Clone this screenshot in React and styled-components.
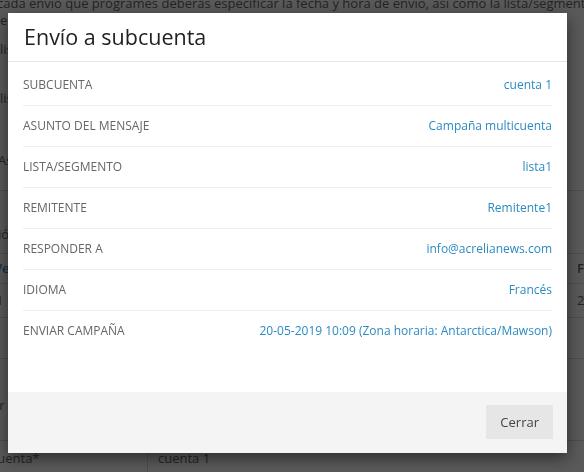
import React from "react"
import styled, { createGlobalStyle } from "styled-components"

const GlobalStyle = createGlobalStyle`
  html, body {
    margin: 0;
    height: 100%;
    overflow: hidden;
    background: #fff;
  }
  body {
    font-family: "Open Sans", "Liberation Sans", sans-serif;
  }
`

/* ---------- page behind the modal ---------- */

const Page = styled.div`
  margin-top: -5px;
  width: 640px;
  color: #666;
  font-size: 13px;
  line-height: 17px;
`

const Line = styled.div`
  white-space: nowrap;
  margin-left: ${props => props.shift || 0}px;
  margin-top: ${props => props.top || 0}px;
  color: ${props => props.link ? "#2b8bc2" : "inherit"};
`

const Section = styled.div`
  margin-top: 21px;
  border-top: 1px solid #ddd;
  padding-top: 35px;
`

const Table = styled.div`
  margin-top: 10px;
  border-top: 1px solid #ddd;
`

const TableRow = styled.div`
  display: grid;
  grid-template-columns: 577px auto;
  align-items: center;
  height: ${props => props.height}px;
  border-bottom: 1px solid #ddd;
  font-weight: ${props => props.head ? 600 : 400};
`

const FormBlock = styled.div`
  padding-top: 38px;
`

const FormRow = styled.div`
  display: grid;
  grid-template-columns: 148px 1fr;
  border-top: 1px solid #ddd;
  margin-top: ${props => props.top || 0}px;
`

const FormLabel = styled.div`
  border-right: 1px solid #ddd;
  padding: 9px 0;
  white-space: nowrap;
  overflow: hidden;
  text-indent: -32px;
`

const FormValue = styled.div`
  padding: 9px 10px;
`

/* ---------- modal ---------- */

const Backdrop = styled.div`
  position: fixed;
  inset: 0;
  background: rgba(0, 0, 0, 0.65);
`

const Dialog = styled.div`
  position: fixed;
  top: 13px;
  left: 8px;
  width: 559px;
  background: #fff;
  box-shadow: 0 5px 15px rgba(0, 0, 0, 0.5);
`

const Header = styled.div`
  height: 48px;
  padding: 0 15px;
  border-bottom: 1px solid #e5e5e5;
  display: flex;
  align-items: center;
`

const Title = styled.h4`
  margin: 0 0 0 1px;
  font-size: 21.5px;
  font-weight: 400;
  line-height: 48px;
  color: #222;
`

const Body = styled.div`
  padding: 3px 15px 41px;
`

const Row = styled.div`
  display: flex;
  justify-content: space-between;
  align-items: center;
  padding: 10px 0;
  font-size: 12px;
  line-height: 20px;
  border-bottom: 1px solid #eee;
  &:last-child {
    border-bottom: 0;
  }
`

const Label = styled.span`
  color: #666;
  text-transform: uppercase;
`

const Value = styled.span`
  color: #2b8bc2;
`

const Footer = styled.div`
  background: #f4f4f4;
  padding: 13px 14px 14px;
  display: flex;
  justify-content: flex-end;
`

const Button = styled.button`
  border: 0;
  background: #e6e6e6;
  color: #444;
  font-family: inherit;
  font-size: 13px;
  line-height: 20px;
  padding: 7px 14px;
  cursor: pointer;
`

const details = [
  ["Subcuenta", "cuenta 1"],
  ["Asunto del mensaje", "Campaña multicuenta"],
  ["Lista/Segmento", "lista1"],
  ["Remitente", "Remitente1"],
  ["Responder a", "info@acrelianews.com"],
  ["Idioma", "Francés"],
  ["Enviar campaña", "20-05-2019 10:09 (Zona horaria: Antarctica/Mawson)"],
]

function Background() {
  return (
    <Page>
      <Line shift={-3}>
        cada envío que programes deberás especificar la fecha y hora de envío, así como la lista/segmento de destino.
      </Line>
      <Line shift={0}>en cada subcuenta.</Line>
      <Line shift={0} top={12}>lista 1</Line>
      <Line shift={0} top={32}>lista 2</Line>
      <Line shift={-2} top={45}>Asunto</Line>
      <Section>
        <Line shift={-68}>Programación</Line>
      </Section>
      <Table>
        <TableRow head height={29}>
          <Line shift={-6} link>Ver</Line>
          <Line>Fecha</Line>
        </TableRow>
        <TableRow height={33}>
          <Line shift={-4}>1</Line>
          <Line>20-05-2019</Line>
        </TableRow>
        <TableRow height={40}>
          <span />
          <span />
        </TableRow>
      </Table>
      <FormBlock>
        <Line shift={-33}>Enviar</Line>
      </FormBlock>
      <FormRow top={26}>
        <FormLabel>Subcuenta*</FormLabel>
        <FormValue>cuenta 1</FormValue>
      </FormRow>
    </Page>
  )
}

export default function App() {
  return (
    <>
      <GlobalStyle />
      <Background />
      <Backdrop />
      <Dialog>
        <Header>
          <Title>Envío a subcuenta</Title>
        </Header>
        <Body>
          {details.map(([label, value]) => (
            <Row key={label}>
              <Label>{label}</Label>
              <Value>{value}</Value>
            </Row>
          ))}
        </Body>
        <Footer>
          <Button>Cerrar</Button>
        </Footer>
      </Dialog>
    </>
  )
}
